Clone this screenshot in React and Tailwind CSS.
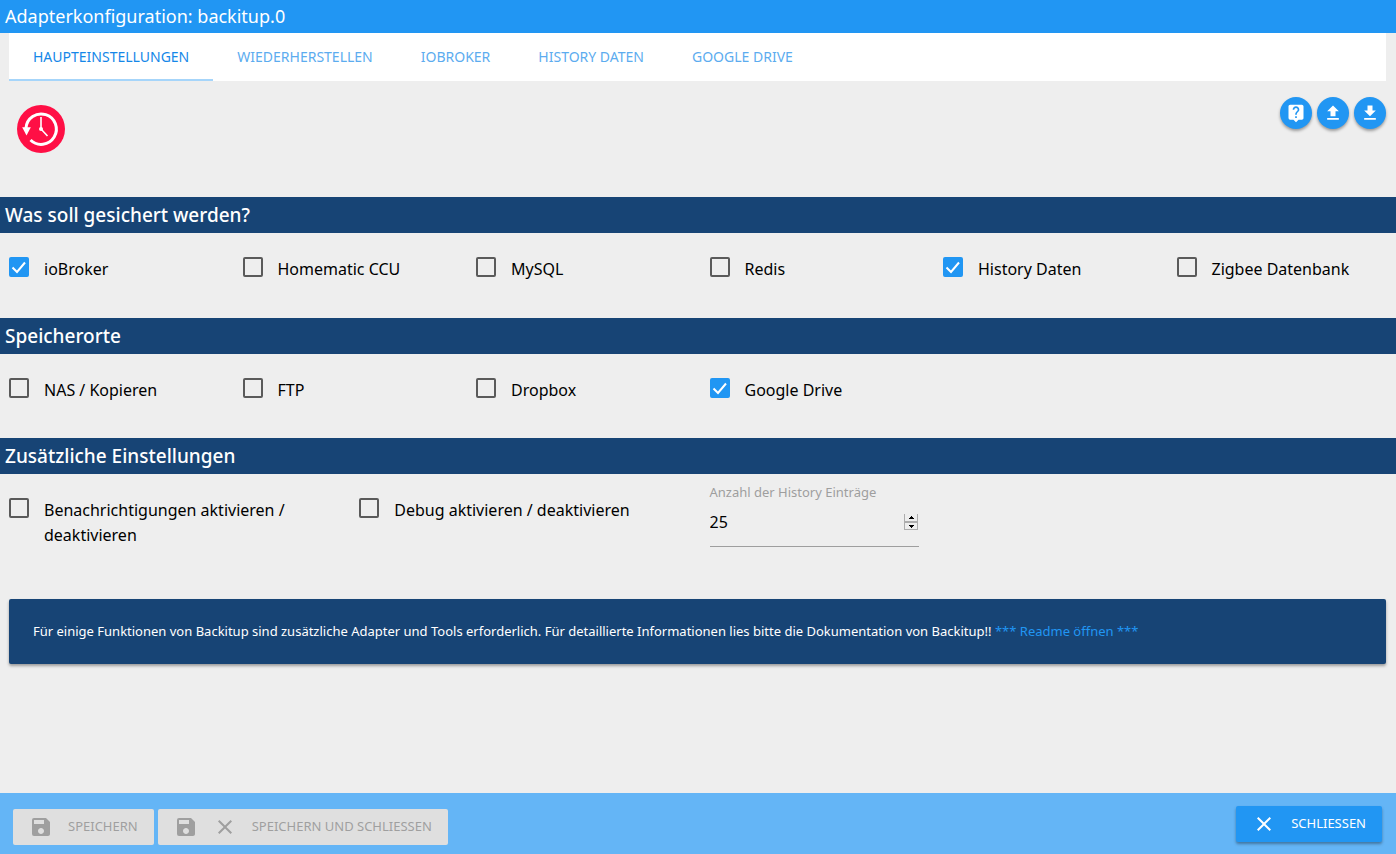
import React, { useState } from 'react';
import { MdClose, MdLiveHelp, MdSave } from 'react-icons/md';

const TABS = ['Haupteinstellungen', 'Wiederherstellen', 'ioBroker', 'History Daten', 'Google Drive'];

const BACKUP_SOURCES = [
  { id: 'iobroker', label: 'ioBroker' },
  { id: 'ccu', label: 'Homematic CCU' },
  { id: 'mysql', label: 'MySQL' },
  { id: 'redis', label: 'Redis' },
  { id: 'history', label: 'History Daten' },
  { id: 'zigbee', label: 'Zigbee Datenbank' },
];

const STORAGE_TARGETS = [
  { id: 'nas', label: 'NAS / Kopieren' },
  { id: 'ftp', label: 'FTP' },
  { id: 'dropbox', label: 'Dropbox' },
  { id: 'googledrive', label: 'Google Drive' },
];

const UploadIcon = () => (
  <svg viewBox="0 0 24 24" className="size-5" fill="currentColor" aria-hidden="true">
    <path d="M9 16h6v-6h4l-7-7-7 7h4zm-4 2h14v2H5z" />
  </svg>
);

const DownloadIcon = () => (
  <svg viewBox="0 0 24 24" className="size-5" fill="currentColor" aria-hidden="true">
    <path d="M19 9h-4V3H9v6H5l7 7 7-7zM5 18v2h14v-2H5z" />
  </svg>
);

const Logo = () => (
  <svg viewBox="0 0 48 48" className="size-12" role="img" aria-label="Backitup">
    <circle cx="24" cy="24" r="24" fill="#ff0f45" />
    <path d="M9 23A15.200 15.200 0 1 1 13.500 35" fill="none" stroke="#fff" strokeWidth="3" />
    <path d="M5.200 22.300h8.600L9.500 30.500z" fill="#fff" />
    <path d="M24 12V24l6.500 7" fill="none" stroke="#fff" strokeWidth="1.6" />
    <circle cx="24" cy="24" r="2" fill="#fff" />
  </svg>
);

const Checkbox = ({ id, label, checked, onChange }) => (
  <div className="flex items-start gap-[15px]">
    <span className="relative size-5 shrink-0">
      <input
        id={id}
        type="checkbox"
        checked={checked}
        onChange={() => onChange(id)}
        className="peer block size-5 appearance-none rounded-xs border-2 border-[#5a5a5a] checked:border-[#2196f3] checked:bg-[#2196f3]"
      />
      <svg
        viewBox="0 0 20 20"
        className="pointer-events-none absolute inset-0 hidden size-5 peer-checked:block"
        fill="none"
        stroke="#fff"
        strokeWidth="2"
        aria-hidden="true"
      >
        <path d="M3.500 10.500l4.500 4.500 8-9.500" />
      </svg>
    </span>
    <label htmlFor={id} className="text-base leading-[25px] text-black">{label}</label>
  </div>
);

const SectionTitle = ({ children }) => (
  <h2 className="bg-[#174475] px-[5px] text-[19px] leading-9 font-medium text-white">{children}</h2>
);

const RoundButton = ({ label, children }) => (
  <button
    type="button"
    aria-label={label}
    className="flex size-8 items-center justify-center rounded-full bg-[#2196f3] text-white shadow-[0_2px_3px_rgba(0,0,0,0.35)]"
  >
    {children}
  </button>
);

const App = () => {
  const [activeTab, setActiveTab] = useState(TABS[0]);
  const [checked, setChecked] = useState(['iobroker', 'history', 'googledrive']);
  const [historyCount, setHistoryCount] = useState(25);

  const handleToggle = (id) => {
    setChecked((prev) => (prev.includes(id) ? prev.filter((item) => item !== id) : [...prev, id]));
  };

  const stepHistory = (step) => {
    setHistoryCount((prev) => Number(prev) + step);
  };

  return (
    <div className="flex min-h-screen flex-col bg-[#eeeeee] font-['Noto_Sans',sans-serif]">
      <header className="bg-[#2196f3] px-[5px]">
        <h1 className="text-lg leading-[33px] text-white">Adapterkonfiguration: backitup.0</h1>
      </header>

      <nav className="mr-[10px] ml-[9px] flex h-12 bg-white">
        {TABS.map((tab) => (
          <button
            key={tab}
            type="button"
            onClick={() => setActiveTab(tab)}
            className={
              tab === activeTab
                ? 'border-b-2 border-[#a6d5fa] px-6 pt-0.5 text-sm text-[#1587e8] uppercase'
                : 'border-b-2 border-transparent px-6 pt-0.5 text-sm text-[#5cacef] uppercase'
            }
          >
            {tab}
          </button>
        ))}
      </nav>

      <main>
        <div className="flex h-[116px] items-start justify-between pt-4 pr-[10px] pl-[17px]">
          <div className="pt-2">
            <Logo />
          </div>
          <div className="flex gap-[5px]">
            <RoundButton label="Hilfe"><MdLiveHelp className="size-5" /></RoundButton>
            <RoundButton label="Hochladen"><UploadIcon /></RoundButton>
            <RoundButton label="Herunterladen"><DownloadIcon /></RoundButton>
          </div>
        </div>

        <SectionTitle>Was soll gesichert werden?</SectionTitle>
        <div className="grid grid-cols-6 gap-6 pt-6 pr-[10px] pb-9 pl-[9px]">
          {BACKUP_SOURCES.map((item) => (
            <Checkbox key={item.id} {...item} checked={checked.includes(item.id)} onChange={handleToggle} />
          ))}
        </div>

        <SectionTitle>Speicherorte</SectionTitle>
        <div className="grid grid-cols-6 gap-6 pt-6 pr-[10px] pb-[35px] pl-[9px]">
          {STORAGE_TARGETS.map((item) => (
            <Checkbox key={item.id} {...item} checked={checked.includes(item.id)} onChange={handleToggle} />
          ))}
        </div>

        <SectionTitle>Zusätzliche Einstellungen</SectionTitle>
        <div className="grid grid-cols-12 gap-6 pr-[10px] pb-[51px] pl-[9px]">
          <div className="col-span-3 pt-6">
            <Checkbox
              id="notifications"
              label="Benachrichtigungen aktivieren / deaktivieren"
              checked={checked.includes('notifications')}
              onChange={handleToggle}
            />
          </div>
          <div className="col-span-3 pt-6">
            <Checkbox
              id="debug"
              label="Debug aktivieren / deaktivieren"
              checked={checked.includes('debug')}
              onChange={handleToggle}
            />
          </div>
          <div className="col-span-2 pt-2">
            <label htmlFor="historyCount" className="block text-[13px] leading-5 text-[#9e9e9e]">
              Anzahl der History Einträge
            </label>
            <div className="flex h-[45px] items-center border-b border-[#9e9e9e] pb-1">
              <input
                id="historyCount"
                type="number"
                value={historyCount}
                onChange={(e) => setHistoryCount(e.target.value)}
                className="w-full min-w-0 appearance-none text-base text-black outline-none [-moz-appearance:textfield] [&::-webkit-inner-spin-button]:appearance-none"
              />
              <div className="mr-px flex w-[14px] shrink-0 flex-col border border-t-0 border-[#adadad]">
                <button
                  type="button"
                  aria-label="Mehr"
                  onClick={() => stepHistory(1)}
                  className="flex h-[9px] items-center justify-center border-b-2 border-[#adadad]"
                >
                  <svg viewBox="0 0 5 3" className="h-[3px] w-[5px]" aria-hidden="true"><path d="M0 3h5V2H4V1H3V0H2v1H1v1H0z" /></svg>
                </button>
                <button
                  type="button"
                  aria-label="Weniger"
                  onClick={() => stepHistory(-1)}
                  className="flex h-[6px] items-center justify-center"
                >
                  <svg viewBox="0 0 5 3" className="h-[3px] w-[5px]" aria-hidden="true"><path d="M0 0h5v1H4v1H3v1H2V2H1V1H0z" /></svg>
                </button>
              </div>
            </div>
          </div>
        </div>

        <div className="mr-[10px] ml-[9px] rounded-xs bg-[#174475] p-6 text-[13px] leading-[17px] text-white shadow-[0_2px_3px_rgba(0,0,0,0.35)]">
          Für einige Funktionen von Backitup sind zusätzliche Adapter und Tools erforderlich. Für detaillierte
          Informationen lies bitte die Dokumentation von Backitup!!{' '}
          <a href="#readme" className="text-[#2196f3]">*** Readme öffnen ***</a>
        </div>
      </main>

      <footer className="mt-auto flex h-[61px] items-start justify-between bg-[#64b5f6] pr-[14px] pl-[13px] text-[13px]">
        <div className="flex gap-1 pt-4">
          <button type="button" disabled className="flex h-9 items-center gap-[15px] rounded-xs bg-[#dfdfdf] px-4 text-[#9f9f9f] uppercase">
            <MdSave className="size-6" />
            Speichern
          </button>
          <button type="button" disabled className="flex h-9 items-center gap-[15px] rounded-xs bg-[#dfdfdf] px-4 text-[#9f9f9f] uppercase">
            <MdSave className="size-6" />
            <MdClose className="size-6" />
            Speichern und schliessen
          </button>
        </div>
        <div className="pt-[13px]">
          <button type="button" className="flex h-9 items-center gap-[15px] rounded-xs bg-[#2196f3] px-4 text-white uppercase shadow-[0_2px_3px_rgba(0,0,0,0.35)]">
            <MdClose className="size-6" />
            Schliessen
          </button>
        </div>
      </footer>
    </div>
  );
};

export default App;
